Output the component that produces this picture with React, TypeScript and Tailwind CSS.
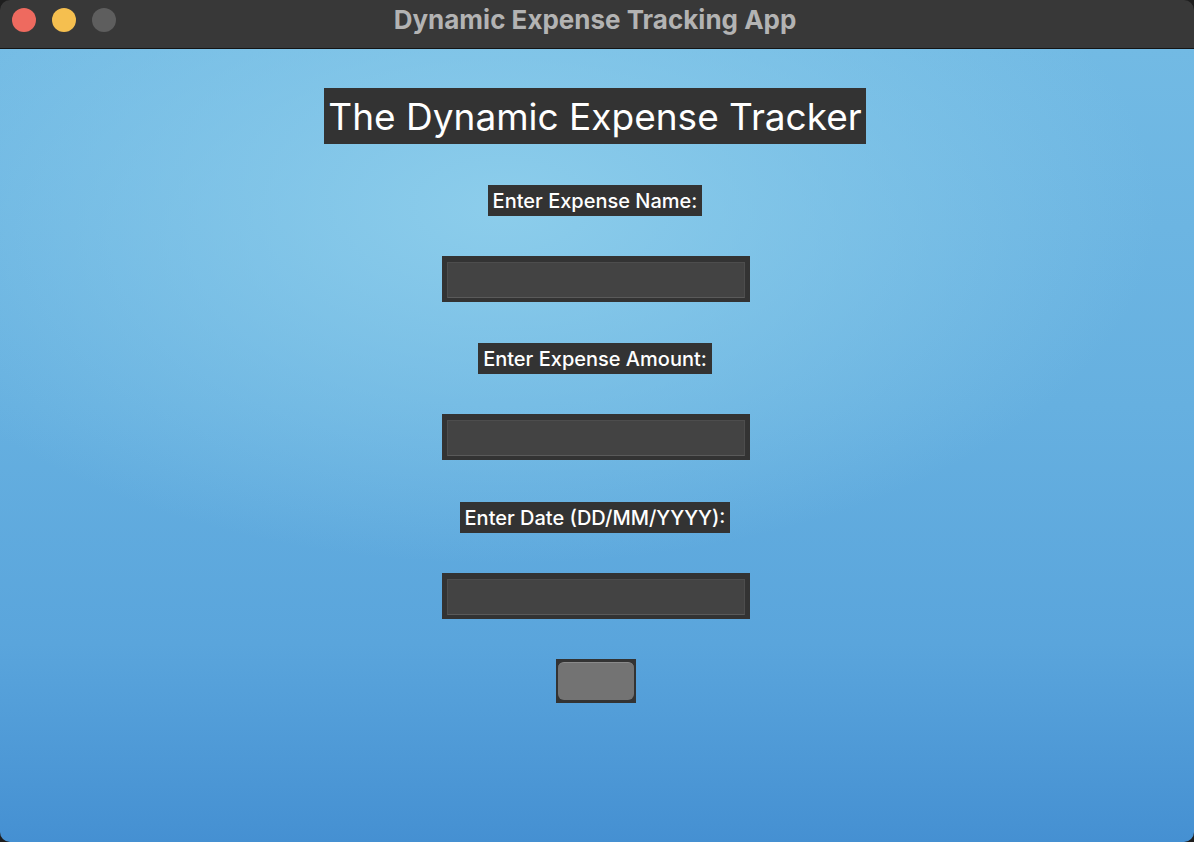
import React from "react";

const font = { fontFamily: '"Inter", "Noto Sans", "Liberation Sans", sans-serif' };

function Label({ text, w }: { text: string; w: string }) {
  return (
    <div className={`${w} h-[31px] bg-[#333333] flex items-center justify-center text-white text-[20px] font-medium leading-none`}>
      {text}
    </div>
  );
}

function Field() {
  return (
    <div className="w-[308px] h-[46px] bg-[#333333] pt-[6px] pb-[4px] px-[5px]">
      <input
        className="w-full h-full bg-[#434343] border border-[#4d4d4d] border-b-[#5a5a5a] outline-none text-white px-2"
        type="text"
      />
    </div>
  );
}

export default function App() {
  return (
    <div className="w-[1194px] h-[842px] bg-[#1e1e1e]" style={font}>
      <div className="w-full h-full flex flex-col rounded-[10px] overflow-hidden">
        {/* title bar */}
        <div className="relative h-[49px] shrink-0 bg-[#383838] border-b border-[#151515] flex items-center justify-center pr-[4px]">
          <div className="absolute left-[12px] top-[8px] flex gap-[16px]">
            <span className="w-[24px] h-[24px] rounded-full bg-[#ee6a5f]" />
            <span className="w-[24px] h-[24px] rounded-full bg-[#f5bf4f]" />
            <span className="w-[24px] h-[24px] rounded-full bg-[#5e5e5e]" />
          </div>
          <span className="text-[#b3b3b3] text-[26px] font-bold mb-[10px]">Dynamic Expense Tracking App</span>
        </div>

        {/* content */}
        <div className="flex-1 flex flex-col items-center pt-[39px] pr-[4px] bg-[radial-gradient(ellipse_55%_45%_at_42%_20%,#8ccdeb_0%,rgba(140,205,235,0)_100%),linear-gradient(180deg,#72bae4_0%,#66b0e0_45%,#5aa5dc_75%,#4590d2_100%)]">
          <div className="w-[542px] h-[56px] bg-[#333333] flex items-center justify-center text-white text-[37px] leading-none">
            The Dynamic Expense Tracker
          </div>
          <div className="mt-[41px]">
            <Label text="Enter Expense Name:" w="w-[214px]" />
          </div>
          <div className="mt-[40px] ml-[2px]">
            <Field />
          </div>
          <div className="mt-[41px]">
            <Label text="Enter Expense Amount:" w="w-[234px]" />
          </div>
          <div className="mt-[40px] ml-[2px]">
            <Field />
          </div>
          <div className="mt-[42px]">
            <Label text="Enter Date (DD/MM/YYYY):" w="w-[270px]" />
          </div>
          <div className="mt-[40px] ml-[2px]">
            <Field />
          </div>
          <div className="mt-[40px] ml-[2px] w-[80px] h-[44px] bg-[#333333] pt-[3px] pb-[3px] px-[2px]">
            <button className="w-full h-full rounded-[6px] bg-[#737373] border-t border-[#8a8a8a]" />
          </div>
        </div>
      </div>
    </div>
  );
}
